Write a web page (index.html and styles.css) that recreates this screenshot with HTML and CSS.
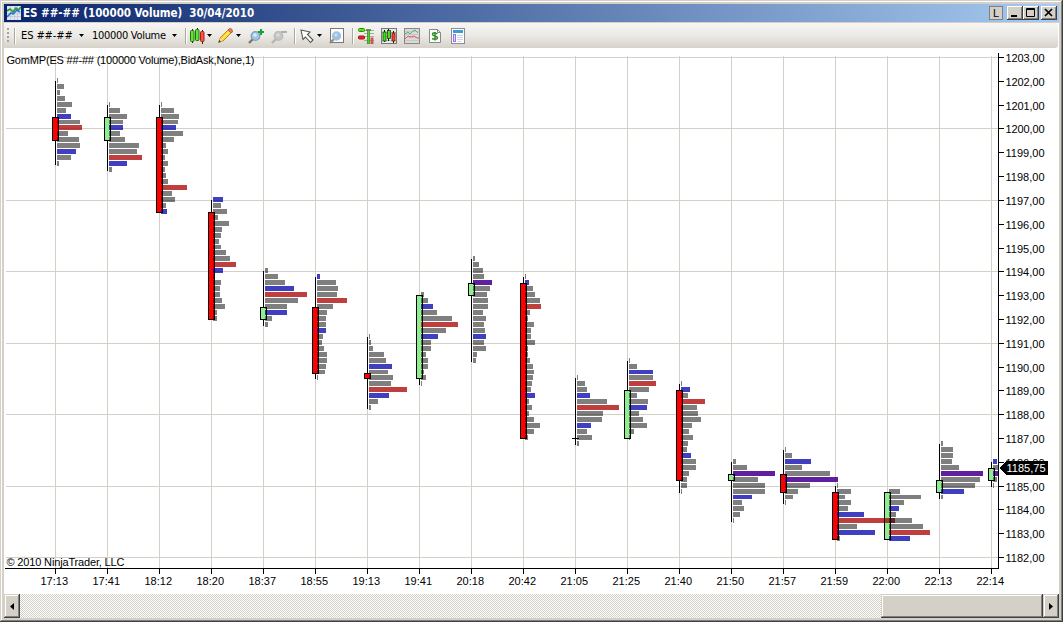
FILE: index.html
```html
<!DOCTYPE html>
<html lang="en">
<head>
<meta charset="utf-8">
<title>ES ##-## (100000 Volume) 30/04/2010</title>
<link rel="stylesheet" href="styles.css">
</head>
<body>
<div class="window">
  <header class="titlebar">
    <svg class="app-icon" width="14" height="14" viewBox="0 0 14 14">
      <rect width="14" height="14" fill="#e4e4f4"/>
      <path d="M0 3.5H14M0 7.5H14M0 10.5H14M3.5 0V14M7.5 0V14M10.5 0V14" stroke="#c6cadc" fill="none"/>
      <path d="M0 5L3 3L6 6L9 2L11 4L14 1" stroke="#249a38" stroke-width="1.6" fill="none"/>
      <path d="M0 11L4 7L6 8L10 4L13 6" stroke="#2878c8" stroke-width="1.6" fill="none"/>
    </svg>
    <h1 class="title">ES ##-## (100000 Volume)&nbsp; 30/04/2010</h1>
    <div class="controls">
      <button class="ctl ctl-link">L</button>
      <button class="ctl"><svg width="10" height="10"><path d="M1 8H7" stroke="#000" stroke-width="2"/></svg></button>
      <button class="ctl"><svg width="10" height="10"><path d="M0.5 0.5H8.5V8.5H.5ZM0 1.5H9" stroke="#000" fill="none"/></svg></button>
      <button class="ctl ctl-close"><svg width="10" height="10"><path d="M1 1L8 8M8 1L1 8" stroke="#000" stroke-width="1.7"/></svg></button>
    </div>
  </header>

  <div class="toolbar-row">
    <nav class="toolbar">
      <span class="grip"></span>
      <span class="sep g5"></span>
      <span class="label g5 w52">ES ##-##</span>
      <span class="caret g6"></span>
      <span class="label g8 w75">100000 Volume</span>
      <span class="caret g5"></span>
      <span class="sep g8"></span>
      <svg class="g3" width="16" height="16">
        <path d="M2.5 1V15M7.5 0V13M12.5 2V16" stroke="#222"/>
        <rect x=".5" y="2.5" width="3.5" height="11" rx="1" fill="#62e52d" stroke="#226b16"/>
        <rect x="5.500" y="1.500" width="3.500" height="11" rx="1" fill="#62e52d" stroke="#226b16"/>
        <rect x="10.500" y="3.500" width="3.500" height="10" rx="1" fill="#ff5148" stroke="#a51f1f"/>
      </svg>
      <span class="caret g1"></span>
      <svg class="g6" width="16" height="16">
        <path d="M1 14L2 10L11 1Q14 1 14 4L5 13Z" fill="#ffd728" stroke="#bd861b"/>
        <path d="M3.500 11.500L12 3" stroke="#fff09a"/>
        <path d="M10 2L11.500 .5Q14.500 0 14.500 4L13 5Z" fill="#e87668" stroke="#b94b42" stroke-width=".7"/>
        <path d="M1 14L2 10L5 13Z" fill="#f2d9ad"/><path d="M0 15L1.500 12L3 13.500Z" fill="#333"/>
      </svg>
      <span class="caret g2"></span>
      <svg class="g7" width="17" height="16">
        <path d="M1 15L6 10" stroke="#777" stroke-width="2.400"/>
        <circle cx="7.500" cy="8" r="4.300" fill="#98c8f0" stroke="#8d9ba9" stroke-width="1.300"/>
        <circle cx="7" cy="7" r="1.800" fill="#d1edff"/>
        <path d="M10 4H16M13 1V7" stroke="#0aa832" stroke-width="2"/>
      </svg>
      <svg class="g6" width="17" height="16">
        <path d="M1 15L6 10" stroke="#b4b4b4" stroke-width="2.400"/>
        <circle cx="7.500" cy="8" r="4.300" fill="#c5c5c5" stroke="#bbb" stroke-width="1.300"/>
        <circle cx="7" cy="7" r="1.800" fill="#ddd"/>
        <path d="M10 4H16" stroke="#b0b0b0" stroke-width="2"/>
      </svg>
      <span class="sep g6"></span>
      <svg class="g4" width="15" height="16">
        <path d="M1 2L10 4L7.500 6.500L13 12L10.500 14.500L5.500 9L3 11.500Z" fill="#fff" stroke="#555" stroke-width="1.100"/>
      </svg>
      <span class="caret g2"></span>
      <svg class="g7" width="16" height="16">
        <rect x="1.500" y=".5" width="13" height="14" fill="#fcfcfc" stroke="#777"/>
        <path d="M1 15L5 11" stroke="#888" stroke-width="2.200"/>
        <circle cx="7.500" cy="8" r="4" fill="#8fc3ef" stroke="#b3bdc9" stroke-width="1.300"/>
        <circle cx="7" cy="7" r="1.700" fill="#bfe1fc"/>
      </svg>
      <span class="sep g7"></span>
      <svg class="g4" width="16" height="16">
        <path d="M6 2.500H16M6 5.500H16M6 8.500H16M6 12.500H16" stroke="#aaa"/>
        <rect x=".5" y=".5" width="6" height="3" rx="1" fill="#55e80c" stroke="#2a8a10"/>
        <rect x=".5" y="8" width="6" height="3" rx="1" fill="#f02222" stroke="#a01616"/>
        <path d="M8 2H13" stroke="#333"/>
        <rect x="9.500" y="2" width="2" height="14" fill="#4bd41b" stroke="#2a8a10" stroke-width=".7"/>
        <rect x="13" y="10" width="2" height="6" fill="#f66" stroke="#a33" stroke-width=".7"/>
      </svg>
      <svg class="g7" width="16" height="16">
        <rect x=".5" y=".5" width="15" height="15" fill="#e9e9e9" stroke="#777"/>
        <path d="M1 4.500H15M1 8.500H15M1 12.500H15" stroke="#bbb"/>
        <path d="M3.500 2V14M7.500 1V13M12.500 3V15" stroke="#111"/>
        <rect x="2" y="4" width="3" height="9" fill="#42df16" stroke="#174d0c" stroke-width=".8"/>
        <rect x="6.500" y="2.500" width="3" height="8" fill="#42df16" stroke="#174d0c" stroke-width=".8"/>
        <rect x="11" y="5" width="3" height="8" fill="#ff3e38" stroke="#7a1414" stroke-width=".8"/>
      </svg>
      <svg class="g7" width="16" height="16">
        <rect x=".5" y=".5" width="15" height="15" fill="#dadada" stroke="#888"/>
        <path d="M1 3.500H15M1 6.500H15M1 9.500H15M1 12.500H15" stroke="#c8c8c8"/>
        <path d="M1 6L4 4L6 6L9 3L11 2L14 5" stroke="#4eb07c" fill="none"/>
        <path d="M1 11L4 8L7 9L10 8L13 10H15" stroke="#e85b62" fill="none"/>
      </svg>
      <svg class="g9" width="12" height="16">
        <path d="M.5 1.500H8.500L11.500 4.500V14.500H.5Z" fill="#fff" stroke="#888"/>
        <path d="M8.500 1.500V4.500H11.500" fill="none" stroke="#888"/>
        <path d="M8.500 5.500Q3 4 3.500 6.500C3.500 8.500 8.500 7.500 8.500 9.700Q8.500 12 3 10.800M6 4V12.500" fill="none" stroke="#2c8c22" stroke-width="1.500"/>
      </svg>
      <svg class="g10" width="14" height="16">
        <rect x=".5" y=".5" width="13" height="15" fill="#fff" stroke="#8c8c98"/>
        <rect x="2" y="2" width="10" height="3" fill="#3b9bd4"/>
        <rect x="2.500" y="6.500" width="2" height="7" fill="#e5dcff" stroke="#9a70f0"/>
        <path d="M6 7.500H12M6 9.500H12M6 11.500H12M6 13.500H10" stroke="#c9d4e8"/>
      </svg>
    </nav>
  </div>

  <svg class="chart" id="chart" width="1055" height="546" viewBox="4 48 1055 546"></svg>

  <div class="scrollbar">
    <button class="sbtn sbtn-left"><svg width="4" height="7"><path d="M4 0V7L0 3.500Z"/></svg></button>
    <div class="track"><div class="thumb"></div></div>
    <button class="sbtn sbtn-right"><svg width="4" height="7"><path d="M0 0V7L4 3.500Z"/></svg></button>
  </div>
</div>
<script src="chart.js"></script>
</body>
</html>
```

FILE: styles.css
```css
* { box-sizing: border-box; }

body { margin: 0; background: #d4d0c8; overflow: hidden; }

.window {
  width: 1063px;
  height: 622px;
  padding: 4px;
  display: flex;
  flex-direction: column;
  background: #d4d0c8;
  box-shadow: inset -1px -1px #404040, inset 1px 1px #d4d0c8, inset -2px -2px #808080, inset 2px 2px #fff;
}

button { padding: 0; margin: 0; border: 0; border-radius: 0; font: inherit; color: #000; }
svg { display: block; flex: none; }

.titlebar {
  height: 18px;
  width: 1055px;
  flex: none;
  display: flex;
  align-items: center;
  padding: 0 2px 0 3px;
  background: linear-gradient(90deg, #0a246a, #a6caf0);
}

.title {
  margin: 0 0 0 2px;
  font: bold 11.5px/18px "DejaVu Sans Condensed", "DejaVu Sans", sans-serif;
  font-stretch: condensed;
  letter-spacing: -0.04px;
  color: #fff;
  white-space: nowrap;
}

.controls { margin-left: auto; display: flex; }

.ctl {
  width: 16px;
  height: 14px;
  display: flex;
  align-items: center;
  justify-content: center;
  background: #d4d0c8;
  box-shadow: inset -1px -1px #404040, inset 1px 1px #fff, inset -2px -2px #808080;
}
.ctl svg { margin: 0 0 1px 0; }
.ctl-close { margin-left: 2px; }
.ctl-link {
  width: 14px;
  margin-right: 4px;
  font: 11px/14px "Liberation Sans", Arial, sans-serif;
  box-shadow: inset 0 0 0 1px #808080;
}

.toolbar-row { height: 26px; flex: none; background: #fff; border-top: 1px solid #d4d0c8; }

.toolbar {
  height: 25px;
  width: 1054px;
  display: flex;
  align-items: center;
  padding-left: 3px;
  border-radius: 0 3px 3px 0;
  background: linear-gradient(#f7f6f4, #eceae6 50%, #d6d2ca);
}

.label {
  font: 11px/24px "DejaVu Sans Condensed", "DejaVu Sans", sans-serif;
  font-stretch: condensed;
  white-space: nowrap;
  flex: none;
}
.w52 { width: 52px; letter-spacing: -0.1px; }
.w75 { width: 75px; letter-spacing: -0.3px; }

.grip {
  width: 2px;
  height: 15px;
  background: repeating-linear-gradient(#a5a29b 0 2px, transparent 2px 4px);
}
.sep { width: 2px; height: 16px; flex: none; background: linear-gradient(90deg, #aaa79f 50%, #fff 50%); }
.caret { width: 5px; height: 3px; flex: none; background: #000; clip-path: polygon(0 0, 100% 0, 50% 100%); }

.g1 { margin-left: 1px; }
.g2 { margin-left: 2px; }
.g3 { margin-left: 3px; }
.g4 { margin-left: 4px; }
.g5 { margin-left: 5px; }
.g6 { margin-left: 6px; }
.g7 { margin-left: 7px; }
.g8 { margin-left: 8px; }
.g9 { margin-left: 9px; }
.g10 { margin-left: 10px; }

.chart { background: #fff; font: 11px "Liberation Sans", Arial, sans-serif; }
.chart rect, .chart polygon { shape-rendering: crispEdges; }
.grid { fill: #d4d0c8; }
.axis { fill: #000; }
.up { fill: #90ee90; }
.down { fill: #f00; }
.outline { fill: none; stroke: #000; }
.volume { fill: #000; fill-opacity: .5; }
.poc { fill: #f00; fill-opacity: .5; }
.area { fill: #00f; fill-opacity: .5; }
.current { fill: #fff; }

.scrollbar {
  height: 24px;
  flex: none;
  display: flex;
}
.track {
  flex: 1;
  display: flex;
  justify-content: flex-end;
  background: repeating-conic-gradient(#fff 0 25%, #d4d0c8 0 50%) 0 0 / 2px 2px;
}
.thumb { width: 162px; }
.thumb, .sbtn {
  background: #d4d0c8;
  box-shadow: inset -1px -1px #404040, inset 1px 1px #d4d0c8, inset -2px -2px #808080, inset 2px 2px #fff;
}
.sbtn { width: 16px; display: flex; align-items: center; justify-content: center; }
```

FILE: chart.js
```javascript
const NS = "http://www.w3.org/2000/svg";
const chart = document.getElementById("chart");
const priceY = p => 57.05 + (1203 - p) * 500 / 21;
const py = p => Math.round(priceY(p));

function add(tag, attrs, text) {
  const el = document.createElementNS(NS, tag);
  for (const key in attrs) el.setAttribute(key, attrs[key]);
  if (text) el.textContent = text;
  chart.appendChild(el);
}
function box(cls, x, y, width, height) {
  add("rect", { class: cls, x, y, width, height });
}

// time, high, low, open, close, first profile price, row volumes
// suffix: b = value area edge, r = point of control, p = both
const candles = [
  ["17:13", 1202, 1198.5, 1200.5, 1199.5, 1202, "1 7 3 8 15 9 14b 23 25r 11 22 23 19b 14 2"],
  ["17:41", 1201, 1198.25, 1199.5, 1200.5, 1201, "1 11 18 14 14b 11 16 30 28 33r 18b 3"],
  ["18:12", 1201, 1196.5, 1200.5, 1196.5, 1201, "1 13 18 17 15b 22 13 5 7 4 7 4 5 7 26r 11 14 5 6b"],
  ["18:20", 1197, 1192, 1196.5, 1192, 1197, "10b 8 14 5 16 9 8 6 8 13 17 23r 10b 1 8 7 7 9 12 4 4"],
  ["18:37", 1194, 1191.75, 1192, 1192.5, 1194, "3 13 20 29b 42r 33 22 22b 7 3"],
  ["18:55", 1193.75, 1189.5, 1192.5, 1189.75, 1193.75, "3b 19 21 20 30r 16 10 9 9 9b 6 5 7 10 10 9 8 1"],
  ["19:13", 1191.25, 1188.25, 1189.75, 1189.5, 1191.25, "1 2 4 15 17 23b 19 24 22 38r 20b 9 2"],
  ["19:41", 1193, 1189.25, 1189.5, 1193, 1193, "3 7 12b 16 31 37r 25 17b 10 10 5 7 7 3 5 1"],
  ["20:18", 1194.5, 1190.25, 1193, 1193.5, 1194.5, "2 6 10 11 19p 17 14 15 15 10 13 11 12 13b 11 13 4 3"],
  ["20:42", 1193.75, 1187, 1193.5, 1187, 1193.75, "1 4b 8 10 15 16r 5 3 9 6 6 10 3 3 5 8 9 8 7 6 10b 4 7 4 9 15 9 3"],
  ["21:05", 1189.5, 1186.75, 1187, 1187, 1189.5, "1 8 10 13b 30 42r 26 25 14b 10 15 2"],
  ["21:25", 1190.25, 1187, 1187, 1189, 1190.25, "1 8 24b 24 27r 20 8 19 18b 10 14 18 5 1"],
  ["21:40", 1189.25, 1184.75, 1189, 1185.25, 1189.25, "1 9b 7 24r 16 17 20 11 8 12 7 6 10b 15 15 8 6 6 1"],
  ["21:50", 1186, 1183.5, 1185.25, 1185.5, 1186, "3 14 42p 25 32 32 19b 9 11 7 1"],
  ["21:57", 1186.5, 1184.25, 1185.5, 1184.75, 1186.5, "1 7 26b 17 45 53p 25 13 8 1"],
  ["21:59", 1185, 1182.75, 1184.75, 1182.75, 1185, "1 14 8 14 11 27b 58r 20 38b 3"],
  ["22:00", 1184.75, 1182.75, 1182.75, 1184.75, 1184.75, "11 32 15 10b 7 23 34 41r 21b"],
  ["22:13", 1186.75, 1184.5, 1184.75, 1185.25, 1186.75, "2 12 12 11 18 42p 39 34 23b 2"],
  ["22:14", 1186, 1185, 1185.25, 1185.75, 1186, "4b 5 5p 4 1"]
];
const columnX = i => 55 + i * 52;

for (let p = 1203; p >= 1182; p -= 3) box("grid", 6, py(p), 992, 1);
candles.forEach((c, i) => box("grid", columnX(i), 56, 1, 512));

candles.forEach(([, high, low, open, close], i) => {
  const x = columnX(i);
  const top = py(Math.max(open, close)), bottom = py(Math.min(open, close));
  box("axis", x, py(high), 1, py(low) - py(high) + 1);
  if (open === close) box("axis", x - 3, top, 7, 1);
  else box(close > open ? "up" : "down", x - 3, top, 7, bottom - top + 1);
});

candles.forEach(([, , , , , first, rows], i) => {
  const rowTop = n => Math.floor(priceY(first - n / 4) - 2.5);
  rows.split(" ").forEach((row, n) => {
    const x = columnX(i) + 2, y = rowTop(n);
    const w = Math.min(parseInt(row, 10), 998 - x), h = rowTop(n + 1) - y - 1;
    box("volume", x, y, w, h);
    if (/[rp]/.test(row)) box("poc", x, y, w, h);
    if (/[bp]/.test(row)) box("area", x, y, w, h);
  });
});

candles.forEach(([, , , open, close], i) => {
  if (open === close) return;
  const top = py(Math.max(open, close)), bottom = py(Math.min(open, close));
  box("outline", columnX(i) - 2.5, top + .5, 6, bottom - top);
});

box("axis", 998, 53, 1, 516);
box("axis", 5, 568, 994, 1);
for (let p = 1203; p >= 1182; p--) {
  box("axis", 999, py(p), 5, 1);
  add("text", { x: 1005.5, y: py(p) + 5, textLength: 39 }, p + ",00");
}
candles.forEach(([time], i) => {
  box("axis", columnX(i), 569, 1, 5);
  add("text", { x: columnX(i) - 14.5, y: 585, textLength: 27.5 }, time);
});

add("polygon", { class: "axis", points: "1000,468 1006,461 1048,461 1048,475 1006,475" });
add("text", { class: "current", x: 1006.5, y: 472, textLength: 39 }, "1185,75");
add("text", { x: 6.5, y: 64, textLength: 248 }, "GomMP(ES ##-## (100000 Volume),BidAsk,None,1)");
add("text", { x: 6.5, y: 566, textLength: 118 }, "© 2010 NinjaTrader, LLC");
```
